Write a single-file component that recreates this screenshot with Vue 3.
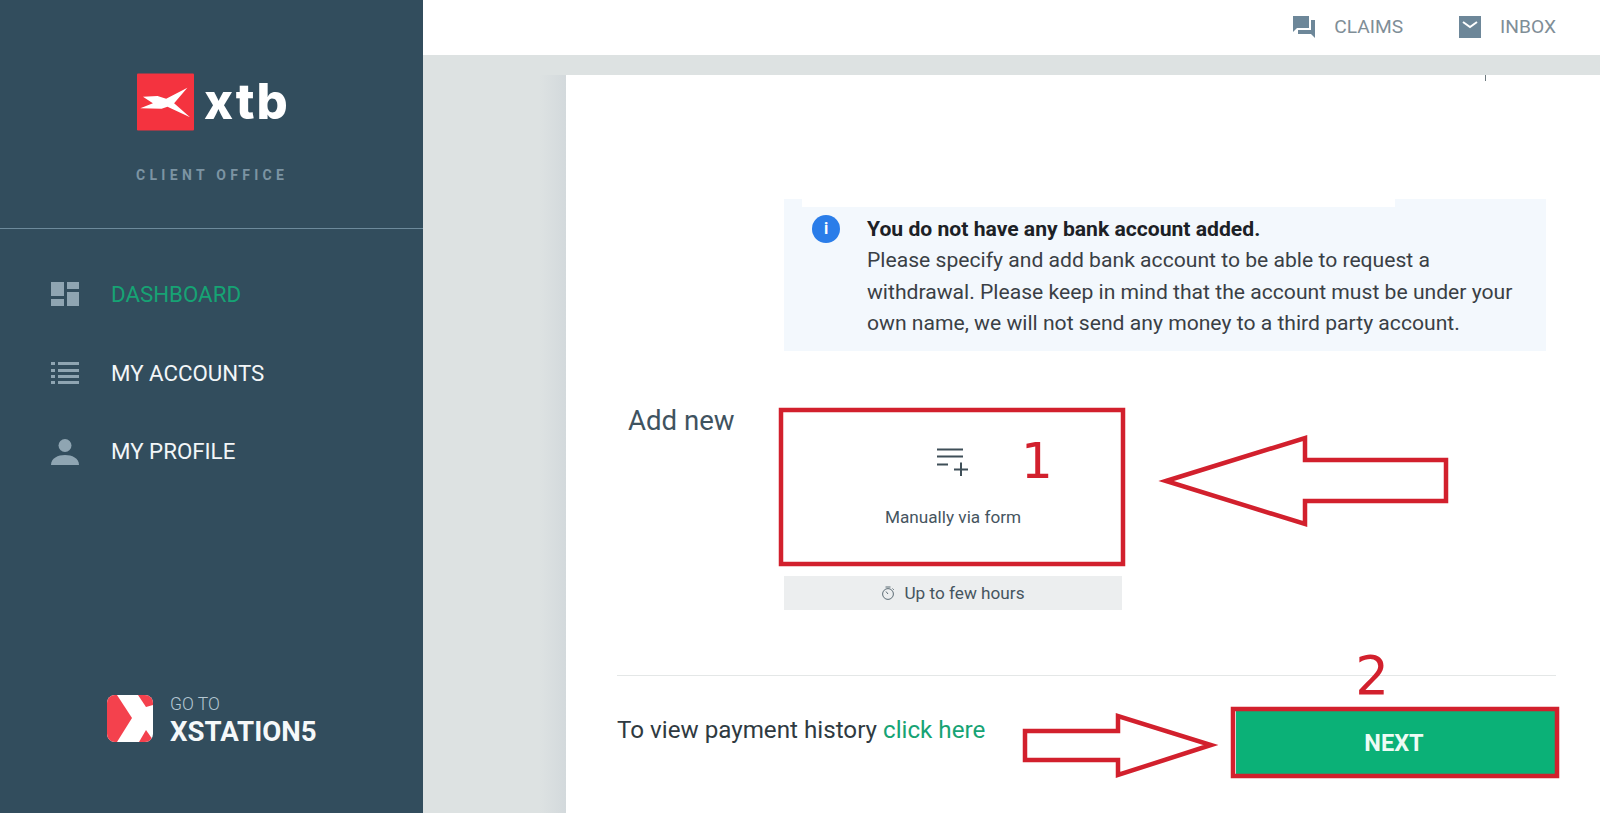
<script setup>
const navItems = [
  { label: "DASHBOARD", icon: "dash", active: true },
  { label: "MY ACCOUNTS", icon: "list", active: false },
  { label: "MY PROFILE", icon: "user", active: false },
];
</script>

<template>
  <div class="page">
    <aside class="sidebar">
      <div class="brand">
        <div class="logo">
          <svg class="logo-mark" viewBox="0 0 172 172">
            <rect width="172" height="172" rx="3" fill="#f4333f" />
            <path d="M18 70 62 68 88 76 152 43 112 90 160 132 92 100 74 106 10 105 48 90Z" fill="#fff" />
          </svg>
          <span class="logo-text">xtb</span>
        </div>
        <div class="office">CLIENT OFFICE</div>
      </div>

      <nav class="nav">
        <a v-for="item in navItems" :key="item.label" class="nav-item" :class="{ active: item.active }">
          <svg class="nav-icon" viewBox="0 0 28 24">
            <g v-if="item.icon === 'dash'" fill="#8fa5b2">
              <rect x="0" y="0" width="13" height="14" />
              <rect x="16" y="0" width="12" height="7" />
              <rect x="16" y="10" width="12" height="14" />
              <rect x="0" y="17" width="13" height="7" />
            </g>
            <g v-else-if="item.icon === 'list'" fill="#8fa5b2">
              <rect x="0" y="1" width="4" height="3" />
              <rect x="7" y="1" width="21" height="3" />
              <rect x="0" y="8" width="4" height="3" />
              <rect x="7" y="8" width="21" height="3" />
              <rect x="0" y="14" width="4" height="3" />
              <rect x="7" y="14" width="21" height="3" />
              <rect x="0" y="20" width="4" height="3" />
              <rect x="7" y="20" width="21" height="3" />
            </g>
            <g v-else fill="#8fa5b2">
              <circle cx="14" cy="6.5" r="6.5" />
              <path d="M0 26c0-7 7-10 14-10s14 3 14 10Z" />
            </g>
          </svg>
          <span>{{ item.label }}</span>
        </a>
      </nav>

      <div class="station">
        <svg class="station-icon" viewBox="0 0 46 47">
          <rect width="46" height="47" fill="#fff" />
          <path d="M0 0H10L25 23 10 47H0Z" fill="#f4414d" />
          <path d="M31 0H46V10L39 12Z" fill="#f4414d" />
          <path d="M32 47 39 35 46 45V47Z" fill="#f4414d" />
        </svg>
        <div class="station-text">
          <div class="goto">GO TO</div>
          <div class="station-name">XSTATION5</div>
        </div>
      </div>
    </aside>

    <main class="main">
      <header class="topbar">
        <a class="top-link claims">
          <svg class="top-icon" viewBox="0 0 24 24">
            <path d="M1 1H17V13H5L1 17Z" fill="#6d8799" />
            <path d="M19 5H23V23L19 19H6V15H19Z" fill="#6d8799" />
          </svg>
          <span>CLAIMS</span>
        </a>
        <a class="top-link">
          <svg class="top-icon" viewBox="0 0 24 24">
            <rect x="1" y="1" width="22" height="22" fill="#6d8799" />
            <path d="M5 7 12 12 19 7" fill="none" stroke="#fff" stroke-width="2" />
          </svg>
          <span>INBOX</span>
        </a>
      </header>

      <section class="content">
        <div class="card">
          <div class="notice">
            <span class="info-dot">i</span>
            <p>
              <b>You do not have any bank account added.</b><br />
              Please specify and add bank account to be able to request a<br />
              withdrawal. Please keep in mind that the account must be under your<br />
              own name, we will not send any money to a third party account.
            </p>
          </div>

          <div class="add-row">
            <div class="add-label">Add new</div>
            <div class="method">
              <div class="method-box">
                <svg class="method-icon" viewBox="0 0 32 28">
                  <path d="M1 1.5H27M1 8.5H27M1 16.5H12M18 21.5H32M25 14.5V28" fill="none" stroke="#3f4f58" stroke-width="2" />
                </svg>
                <div class="method-name">Manually via form</div>
              </div>
              <div class="method-time">
                <svg class="clock" viewBox="0 0 14 14">
                  <circle cx="7" cy="8" r="5.4" fill="none" stroke="#5d6c75" stroke-width="1" />
                  <path d="M4.5 1H9.5M7 8 5 5.5M11.5 2.5 12.8 3.8" fill="none" stroke="#5d6c75" stroke-width="1" />
                </svg>
                <span>Up to few hours</span>
              </div>
            </div>
          </div>

          <div class="footer-row">
            <div class="history">To view payment history <a class="link">click here</a></div>
            <button class="next">NEXT</button>
          </div>
        </div>
      </section>
    </main>

    <svg class="marks" viewBox="0 0 1600 813">
      <g fill="none" stroke="#d2202d" stroke-width="4.5">
        <rect x="781" y="410" width="342" height="154" />
        <rect x="1233" y="709" width="324" height="67" />
        <path d="M1166 481 1305 438V460H1446V501H1305V524Z" />
        <path d="M1025 731H1118V716L1211 745 1118 775V760H1025Z" />
      </g>
      <text x="1037" y="478" class="mark-num one" text-anchor="middle">1</text>
      <text x="1372" y="694" class="mark-num" text-anchor="middle">2</text>
    </svg>
  </div>
</template>

<style scoped>
.page {
  position: relative;
  display: flex;
  width: 1600px;
  height: 813px;
  overflow: hidden;
  font-family: Roboto, "Liberation Sans", sans-serif;
}

.sidebar {
  display: flex;
  flex-direction: column;
  width: 423px;
  flex-shrink: 0;
  background: #324d5d;
}

.brand {
  height: 155px;
  padding-top: 73px;
  border-bottom: 1px solid #6d8a9b;
}

.logo {
  display: flex;
  align-items: center;
  margin-left: 137px;
}

.logo-mark {
  width: 57px;
  height: 58px;
}

.logo-text {
  margin-left: 10px;
  font-family: Inter, Roboto, sans-serif;
  font-size: 49px;
  line-height: 58px;
  font-weight: 800;
  letter-spacing: 2px;
  color: #fff;
}

.office {
  margin: 36px 0 0 136px;
  font-size: 14px;
  line-height: 16px;
  font-weight: 700;
  letter-spacing: 4.3px;
  color: #7c94a3;
}

.nav {
  display: flex;
  flex-direction: column;
  padding-top: 26px;
}

.nav-item {
  display: flex;
  align-items: center;
  height: 78.5px;
  padding-left: 51px;
  font-size: 22.3px;
  color: #f2f6f8;
}

.nav-item.active {
  color: #16a374;
}

.nav-icon {
  width: 28px;
  height: 24px;
  margin-right: 32px;
  overflow: visible;
}

.station {
  display: flex;
  align-items: flex-start;
  margin-top: auto;
  margin-bottom: 65px;
  margin-left: 107px;
}

.station-icon {
  width: 46px;
  height: 47px;
  border-radius: 8px;
}

.station-text {
  margin-left: 17px;
}

.goto {
  font-size: 17.5px;
  line-height: 18px;
  font-weight: 300;
  color: #b5c7d2;
}

.station-name {
  margin-top: 3px;
  font-size: 27.6px;
  line-height: 32px;
  font-weight: 700;
  color: #f5f8f9;
}

.main {
  display: flex;
  flex-direction: column;
  flex: 1;
  min-width: 0;
}

.topbar {
  display: flex;
  justify-content: flex-end;
  align-items: center;
  gap: 55px;
  height: 55px;
  padding: 0 44px 2px 0;
  box-sizing: border-box;
  background: #fff;
}

.top-link {
  display: flex;
  align-items: center;
  font-size: 19.2px;
  color: #7f8e97;
}

.top-icon {
  width: 24px;
  height: 24px;
  margin-right: 18px;
}

.content {
  flex: 1;
  display: flex;
  padding: 20px 0 0 143px;
  background-color: #dde2e2;
  background-image: linear-gradient(90deg, #dde2e2 0, #dde2e2 117px, #d3d9dc 143px);
  background-size: 143px 100%;
  background-repeat: no-repeat;
  background-position: 0 20px;
}

.card {
  position: relative;
  flex: 1;
  display: flex;
  flex-direction: column;
  padding: 124px 44px 0 51px;
  background: #fff;
}

.card::before {
  content: "";
  position: absolute;
  top: 0;
  left: 919px;
  width: 1px;
  height: 6px;
  background: #6d7a80;
}

.notice {
  position: relative;
  display: flex;
  height: 152px;
  margin: 0 10px 0 167px;
  padding: 16px 20px 0 28px;
  background: #f3f8fd;
  box-sizing: border-box;
}

.notice::before {
  content: "";
  position: absolute;
  top: 0;
  left: 18px;
  width: 593px;
  height: 8px;
  background: #fff;
}

.info-dot {
  flex-shrink: 0;
  width: 28px;
  height: 28px;
  margin-right: 27px;
  border-radius: 50%;
  background: #2a7de9;
  color: #fff;
  font-size: 16px;
  font-weight: 700;
  line-height: 28px;
  text-align: center;
}

.notice p {
  margin: -2px 0 0;
  font-size: 21.13px;
  line-height: 31.4px;
  color: #3a3f45;
  white-space: nowrap;
}

.notice b {
  color: #1c2126;
  font-weight: 700;
}

.add-row {
  display: flex;
  margin-top: 57px;
}

.add-label {
  width: 156px;
  padding: 1px 0 0 11px;
  font-size: 27.6px;
  line-height: 24px;
  color: #3f5360;
}

.method {
  width: 338px;
}

.method-box {
  display: flex;
  flex-direction: column;
  align-items: center;
  height: 168px;
  box-sizing: border-box;
  padding-top: 40px;
}

.method-icon {
  width: 32px;
  height: 28px;
  margin-left: -3px;
}

.method-name {
  margin-top: 31px;
  font-size: 17.2px;
  line-height: 20px;
  color: #46555f;
}

.method-time {
  display: flex;
  align-items: center;
  justify-content: center;
  height: 34px;
  padding-bottom: 1px;
  box-sizing: border-box;
  background: #eceeef;
  font-size: 17.2px;
  color: #46555f;
}

.clock {
  width: 14px;
  height: 14px;
  margin-right: 9px;
}

.footer-row {
  display: flex;
  justify-content: space-between;
  margin-top: 65px;
  padding-top: 32px;
  border-top: 1px solid #e4e7e7;
}

.history {
  margin-top: 8px;
  font-size: 24.2px;
  line-height: 28px;
  color: #2f3a41;
}

.link {
  color: #16a374;
}

.next {
  width: 322px;
  height: 66px;
  margin: 0 -2px 0 0;
  padding: 3px 6px 0 0;
  border: none;
  background: #0bb177;
  color: #eefbf5;
  font-family: inherit;
  font-size: 23.5px;
  font-weight: 700;
}

.marks {
  position: absolute;
  left: 0;
  top: 0;
  width: 1600px;
  height: 813px;
  pointer-events: none;
}

.mark-num {
  font-family: "DejaVu Sans", sans-serif;
  font-size: 53px;
  fill: #d2202d;
}

.mark-num.one {
  font-size: 50px;
}
</style>
